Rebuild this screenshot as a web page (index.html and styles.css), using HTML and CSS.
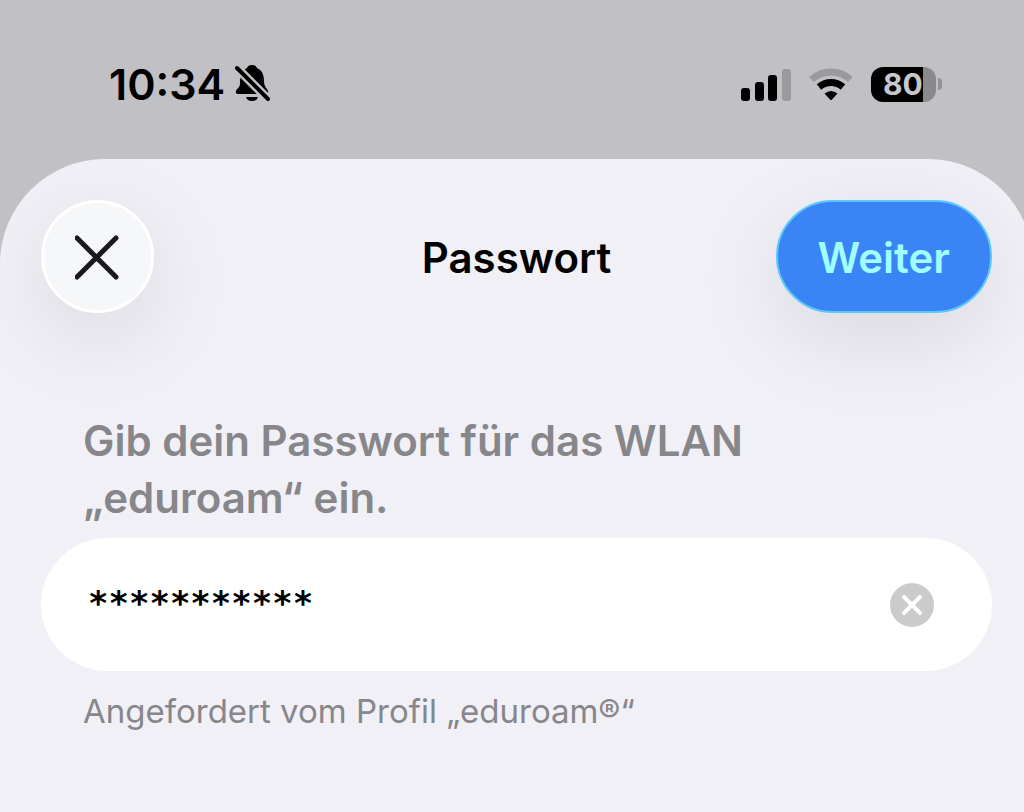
FILE: index.html
```html
<!DOCTYPE html>
<html lang="de">
<head>
<meta charset="utf-8">
<meta name="viewport" content="width=device-width, initial-scale=1">
<title>Passwort</title>
<link rel="stylesheet" href="styles.css">
</head>
<body>
<header class="status">
  <div class="status-group status-time">
    <time>10:34</time>
    <svg class="bell" viewBox="0 0 36 38" width="36" height="38" role="img" aria-label="Stumm">
      <path d="M5 18C5 9 8 5 12 3Q13 0 17 0Q21 0 22 3C27 5 29 10 29 16C29 22 32 23 33 26Q34 29 31 29H3Q0 29 1 26C2 23 5 23 5 18Z"/>
      <path d="M11 32H23Q22 36 17 36Q12 36 11 32Z"/>
      <path class="bell-gap" d="M0 1L35 36"/>
      <path class="bell-slash" d="M2 3L33 34"/>
    </svg>
  </div>
  <div class="status-group status-icons">
    <svg viewBox="0 0 50 33" width="50" height="33" role="img" aria-label="Mobilfunk">
      <rect x="0" y="20" width="9" height="13" rx="3"/>
      <rect x="14" y="14" width="9" height="19" rx="3"/>
      <rect x="27" y="7" width="9" height="26" rx="3"/>
      <rect class="dim" x="41" y="1" width="9" height="32" rx="3"/>
    </svg>
    <svg class="wifi" viewBox="0 0 44 33" width="44" height="33" role="img" aria-label="WLAN">
      <path class="arc dim-arc" d="M2.5 11.5Q11 4 22 4T41.500 11.500"/>
      <path class="arc" d="M10 19Q15.500 14.500 22 14.500T34 19"/>
      <path d="M15.500 25.500Q22 20.500 28.500 25.500L23 31.500Q22 32.500 21 31.500Z"/>
    </svg>
    <div class="battery"><span class="battery-body">80</span><span class="battery-tip"></span></div>
  </div>
</header>
<main class="sheet">
  <div class="toolbar">
    <button class="close" type="button" aria-label="Schließen">
      <svg viewBox="0 0 46 46" width="46" height="46"><path d="M2 4L41 43M41 4L2 43"/></svg>
    </button>
    <h1 class="title">Passwort</h1>
    <button class="next" type="submit" form="login">Weiter</button>
  </div>
  <form class="form" id="login">
    <label class="prompt" for="password">Gib dein Passwort für das WLAN<br>„eduroam“ ein.</label>
    <div class="field">
      <input class="password" id="password" type="text" value="***********" autocomplete="off" aria-describedby="hint">
      <button class="clear" type="button" aria-label="Text löschen">
        <svg viewBox="0 0 20 20" width="20" height="20"><path d="M2 2L18 18M18 2L2 18"/></svg>
      </button>
    </div>
    <p class="hint" id="hint">Angefordert vom Profil „eduroam®“</p>
  </form>
</main>
</body>
</html>
```
FILE: styles.css
```css
* { box-sizing: border-box; }

body {
  margin: 0;
  min-height: 100vh;
  display: flex;
  flex-direction: column;
  overflow: hidden;
  background: #c1c0c5;
  color: #000;
  font-family: Inter, "Liberation Sans", sans-serif;
}

button { margin: 0; border: 0; font-family: inherit; }

.status {
  display: flex;
  justify-content: space-between;
  align-items: center;
  padding: 56px 82px 47px 109px;
}
.status-group { display: flex; align-items: center; }
.status-time {
  gap: 10px;
  font-size: 43px;
  line-height: 56px;
  font-weight: 600;
}
.bell-gap { stroke: #c1c0c5; stroke-width: 9; }
.bell-slash { stroke: #000; stroke-width: 4; stroke-linecap: round; }
.status-icons { gap: 18px; }
.dim { fill: #9a9a9c; }
.arc { fill: none; stroke: #000; stroke-width: 7; }
.dim-arc { stroke: #9a9a9c; }

.battery { display: flex; align-items: center; gap: 2px; }
.battery-body {
  width: 65px;
  padding-left: 12px;
  border-radius: 12px;
  background: linear-gradient(90deg, #000 80%, #89898b 80%);
  color: #c8c7cc;
  font-size: 30px;
  line-height: 35px;
  font-weight: 700;
}
.battery-tip {
  width: 4px;
  height: 12px;
  border-radius: 0 4px 4px 0;
  background: #929294;
}

.sheet {
  flex: 1;
  margin-right: -9px;
  padding: 41px 41px 80px;
  overflow: hidden;
  border-radius: 105px 105px 0 0;
  background: #f1f0f6;
}
.toolbar {
  display: grid;
  grid-template-columns: 1fr auto 1fr;
  align-items: center;
}
.close,
.next {
  height: 113px;
  box-shadow: 0 24px 90px rgba(0, 0, 0, 0.1);
}
.close {
  display: grid;
  place-items: center;
  width: 113px;
  padding: 0;
  border: 3px solid #fff;
  border-radius: 50%;
  background: #f6f7f9;
}
.close svg { fill: none; stroke: #19191b; stroke-width: 5; stroke-linecap: round; }
.title {
  margin: 0;
  padding-top: 2px;
  font-size: 42px;
  line-height: 56px;
  font-weight: 600;
}
.next {
  justify-self: end;
  padding: 2px 40px 0;
  border: 2px solid #59c8fb;
  border-radius: 57px;
  background: #3b84f5;
  color: #a0ffff;
  font-size: 42px;
  font-weight: 600;
}

.form { display: flex; flex-direction: column; margin-top: 99px; }
.prompt {
  padding: 0 42px;
  color: #87868b;
  font-size: 42px;
  line-height: 57px;
  font-weight: 600;
}
.field {
  display: flex;
  align-items: center;
  margin-top: 12px;
  padding: 0 58px 0 47px;
  height: 133px;
  border-radius: 67px;
  background: #fff;
}
.password {
  flex: 1;
  min-width: 0;
  padding: 0 0 4px;
  border: 0;
  outline: 0;
  background: none;
  color: #000;
  font-family: "DejaVu Sans Mono", monospace;
  font-size: 34px;
  font-weight: 700;
}
.clear {
  display: grid;
  place-items: center;
  width: 44px;
  height: 44px;
  padding: 0;
  border-radius: 50%;
  background: #cbcbcb;
}
.clear svg { fill: none; stroke: #fff; stroke-width: 4; stroke-linecap: round; }
.hint {
  margin: 19px 42px 0;
  color: #87868b;
  font-size: 33px;
  line-height: 42px;
}
```
